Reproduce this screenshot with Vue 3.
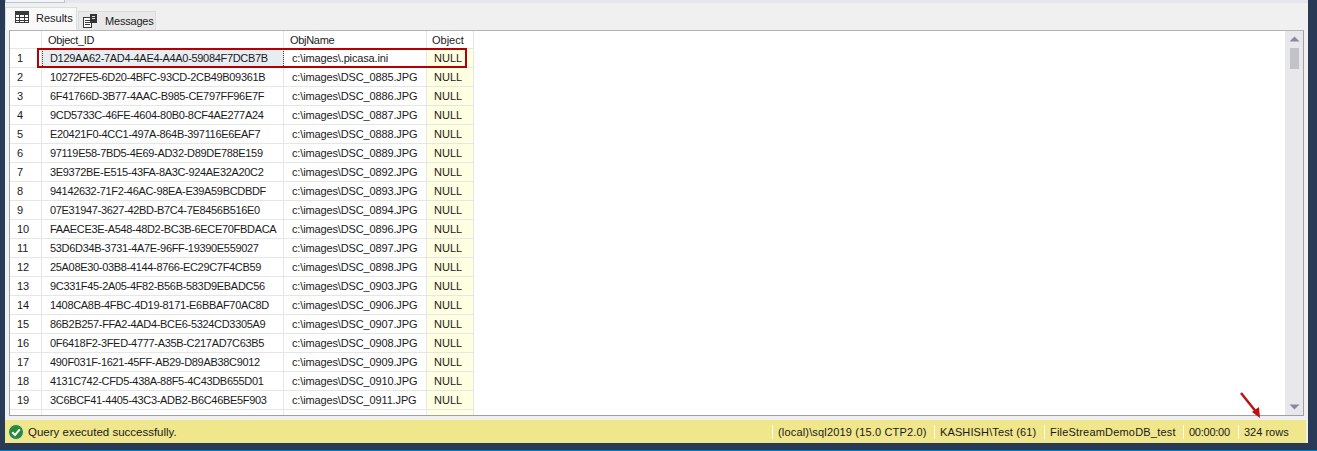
<script setup>
const rows = [
  ['D129AA62-7AD4-4AE4-A4A0-59084F7DCB7B', 'c:\\images\\.picasa.ini'],
  ['10272FE5-6D20-4BFC-93CD-2CB49B09361B', 'c:\\images\\DSC_0885.JPG'],
  ['6F41766D-3B77-4AAC-B985-CE797FF96E7F', 'c:\\images\\DSC_0886.JPG'],
  ['9CD5733C-46FE-4604-80B0-8CF4AE277A24', 'c:\\images\\DSC_0887.JPG'],
  ['E20421F0-4CC1-497A-864B-397116E6EAF7', 'c:\\images\\DSC_0888.JPG'],
  ['97119E58-7BD5-4E69-AD32-D89DE788E159', 'c:\\images\\DSC_0889.JPG'],
  ['3E9372BE-E515-43FA-8A3C-924AE32A20C2', 'c:\\images\\DSC_0892.JPG'],
  ['94142632-71F2-46AC-98EA-E39A59BCDBDF', 'c:\\images\\DSC_0893.JPG'],
  ['07E31947-3627-42BD-B7C4-7E8456B516E0', 'c:\\images\\DSC_0894.JPG'],
  ['FAAECE3E-A548-48D2-BC3B-6ECE70FBDACA', 'c:\\images\\DSC_0896.JPG'],
  ['53D6D34B-3731-4A7E-96FF-19390E559027', 'c:\\images\\DSC_0897.JPG'],
  ['25A08E30-03B8-4144-8766-EC29C7F4CB59', 'c:\\images\\DSC_0898.JPG'],
  ['9C331F45-2A05-4F82-B56B-583D9EBADC56', 'c:\\images\\DSC_0903.JPG'],
  ['1408CA8B-4FBC-4D19-8171-E6BBAF70AC8D', 'c:\\images\\DSC_0906.JPG'],
  ['86B2B257-FFA2-4AD4-BCE6-5324CD3305A9', 'c:\\images\\DSC_0907.JPG'],
  ['0F6418F2-3FED-4777-A35B-C217AD7C63B5', 'c:\\images\\DSC_0908.JPG'],
  ['490F031F-1621-45FF-AB29-D89AB38C9012', 'c:\\images\\DSC_0909.JPG'],
  ['4131C742-CFD5-438A-88F5-4C43DB655D01', 'c:\\images\\DSC_0910.JPG'],
  ['3C6BCF41-4405-43C3-ADB2-B6C46BE5F903', 'c:\\images\\DSC_0911.JPG'],
]
</script>

<template>
  <div class="window">
    <div class="panel">
      <div class="topstrip"><span class="topbox"></span></div>
      <div class="tabs">
        <div class="tab active">
          <svg width="15" height="13" viewBox="0 0 15 13" class="ticon">
            <rect x="0.5" y="0.5" width="13" height="11" fill="#fff" stroke="#3a3a3a"/>
            <rect x="0.5" y="0.5" width="13" height="3" fill="#3a3a3a" stroke="#3a3a3a"/>
            <path d="M0 6.5h14M0 9.5h14M4.5 1v11M9.5 1v11" stroke="#3a3a3a" fill="none"/>
          </svg>
          <span>Results</span>
        </div>
        <div class="tab">
          <svg width="15" height="14" viewBox="0 0 15 14" class="micon">
            <rect x="0.5" y="3.5" width="8" height="10" fill="#fff" stroke="#3a3a3a"/>
            <path d="M2 6.5h5M2 8.5h5M2 10.5h5" stroke="#3a3a3a" fill="none"/>
            <rect x="7" y="0" width="7" height="9" fill="#333"/>
            <rect x="9" y="2" width="3" height="1" fill="#ddd"/>
            <rect x="9" y="4" width="3" height="1" fill="#ddd"/>
          </svg>
          <span>Messages</span>
        </div>
      </div>
      <div class="gridbox">
        <div class="gridbody">
          <div class="row head">
            <div class="c num"></div>
            <div class="c id">Object_ID</div>
            <div class="c name">ObjName</div>
            <div class="c obj">Object</div>
          </div>
          <div v-for="(r, i) in rows" :key="i" class="row">
            <div class="c num">{{ i + 1 }}</div>
            <div class="c id" :class="{ sel: i === 0 }"><span>{{ r[0] }}</span></div>
            <div class="c name"><span>{{ r[1] }}</span></div>
            <div class="c obj nul">NULL</div>
          </div>
          <div class="row last">
            <div class="c num"></div>
            <div class="c id"></div>
            <div class="c name"></div>
            <div class="c obj nul"></div>
          </div>
          <div class="redbox"></div>
        </div>
        <div class="scroll">
          <svg width="17" height="17" viewBox="0 0 17 17" class="arr"><path d="M3.5 10.5L8.5 5.5L13.5 10.5Z" fill="#868999"/></svg>
          <div class="thumb"></div>
          <div class="grow"></div>
          <svg width="17" height="17" viewBox="0 0 17 17" class="arr"><path d="M3.5 6.5L8.5 11.5L13.5 6.5Z" fill="#868999"/></svg>
        </div>
      </div>
      <div class="status">
        <svg width="16" height="16" viewBox="0 0 16 16" class="ok">
          <circle cx="8" cy="8" r="7.5" fill="#2a8a3c" stroke="#dfe8c4"/>
          <path d="M4.2 8.2L7 11L11.8 5.4" stroke="#fff" stroke-width="2" fill="none"/>
        </svg>
        <span class="msg">Query executed successfully.</span>
        <span class="sec s1">(local)\sql2019 (15.0 CTP2.0)</span>
        <span class="sec s2">KASHISH\Test (61)</span>
        <span class="sec s3">FileStreamDemoDB_test</span>
        <span class="sec s4">00:00:00</span>
        <span class="sec s5">324 rows</span>
      </div>
      <svg class="pointer" width="30" height="34" viewBox="0 0 30 34">
        <path d="M2 2L18 22" stroke="#c00d0d" stroke-width="2.4" fill="none"/>
        <path d="M21 27L13 21L20 16Z" fill="#c00d0d"/>
      </svg>
    </div>
  </div>
</template>

<style>
html, body { margin: 0; background: #293955; }
</style>

<style scoped>
.window {
  width: 1317px;
  height: 451px;
  box-sizing: border-box;
  background: #293a56;
  padding: 0 9px 7px 5px;
  border-bottom: 1px solid #007acc;
  font-family: "Liberation Sans", Arial, sans-serif;
  font-size: 11px;
  color: #1a1a1a;
  overflow: hidden;
}
.panel {
  position: relative;
  height: 100%;
  background: #f0f0f0;
  display: flex;
  flex-direction: column;
}
.topstrip {
  height: 3px;
  background: #e6e7ed;
  flex: none;
  display: flex;
}
.topbox {
  width: 60px;
  border: 1px solid #b5c4dc;
  border-top: 0;
  background: #f4f4f6;
  box-sizing: border-box;
}
.tabs {
  height: 27px;
  flex: none;
  display: flex;
  align-items: flex-end;
  font-size: 11px;
}
.tab {
  box-sizing: border-box;
  height: 19px;
  width: 78px;
  display: flex;
  align-items: center;
  gap: 7px;
  padding-left: 4px;
  margin-left: 1px;
  background: #e9e9e9;
  border: 1px solid #dcdcdc;
  border-bottom: 0;
  letter-spacing: -0.2px;
}
.tab.active {
  width: 72px;
  height: 23px;
  background: #f9f9f9;
  margin-left: 0;
  padding-left: 9px;
  padding-bottom: 3px;
  gap: 6px;
  letter-spacing: 0;
}
.micon { flex: none; }
.ticon { flex: none; }
.gridbox {
  flex: 1;
  min-height: 0;
  margin: 0 4px 4px 4px;
  border: 1px solid #a0a0a0;
  border-top-color: #b4b4b4;
  background: #fff;
  display: flex;
  overflow: hidden;
}
.gridbody {
  flex: 1;
  position: relative;
  overflow: hidden;
}
.row {
  display: flex;
  height: 19px;
  line-height: 19px;
  white-space: nowrap;
}
.row.head { height: 18px; line-height: 18px; }
.row.last { height: 10px; }
.c {
  box-sizing: border-box;
  border-right: 1px solid #e6e6e6;
  border-bottom: 1px solid #e6e6e6;
  padding-left: 7px;
}
.num { width: 32px; }
.id { width: 242px; padding-left: 8px; }
.name { width: 143px; padding-left: 8px; }
.obj { width: 47px; padding-left: 5px; }
.head .id { padding-left: 6px; letter-spacing: -0.3px; }
.head .name { padding-left: 6px; letter-spacing: -0.3px; }
.nul {
  background: #ffffe1;
  padding-left: 7px;
}
.id span { letter-spacing: -0.32px; }
.name span { letter-spacing: -0.14px; }
.sel {
  background: #e8edf2;
  outline: 1px dotted #444;
  outline-offset: -1px;
}
.redbox {
  position: absolute;
  left: 27px;
  top: 17px;
  width: 430px;
  height: 20px;
  box-sizing: border-box;
  border: 2px solid #b40000;
  pointer-events: none;
}
.scroll {
  width: 18px;
  flex: none;
  background: #e8e8ec;
  display: flex;
  flex-direction: column;
  align-items: center;
}
.arr { flex: none; }
.thumb {
  width: 9px;
  height: 21px;
  background: #c2c3c9;
  flex: none;
}
.grow { flex: 1; }
.status {
  flex: none;
  height: 23px;
  margin-right: 2px;
  background: #f0e68c;
  display: flex;
  align-items: center;
  font-size: 11px;
  color: #1a1a1a;
}
.ok { margin-left: 3px; flex: none; }
.msg { margin-left: 4px; flex: 1; font-size: 11.5px; }
.sec {
  box-sizing: border-box;
  height: 14px;
  line-height: 14px;
  border-left: 1px solid #fdfbe8;
  padding-left: 5px;
  white-space: nowrap;
}
.s1 { width: 162px; letter-spacing: 0.17px; }
.s2 { width: 110px; letter-spacing: 0.12px; }
.s3 { width: 139px; letter-spacing: 0.19px; }
.s4 { width: 55px; letter-spacing: -0.25px; }
.s5 { width: 68px; }
.pointer {
  position: absolute;
  left: 1234px;
  top: 391px;
  pointer-events: none;
}
</style>
